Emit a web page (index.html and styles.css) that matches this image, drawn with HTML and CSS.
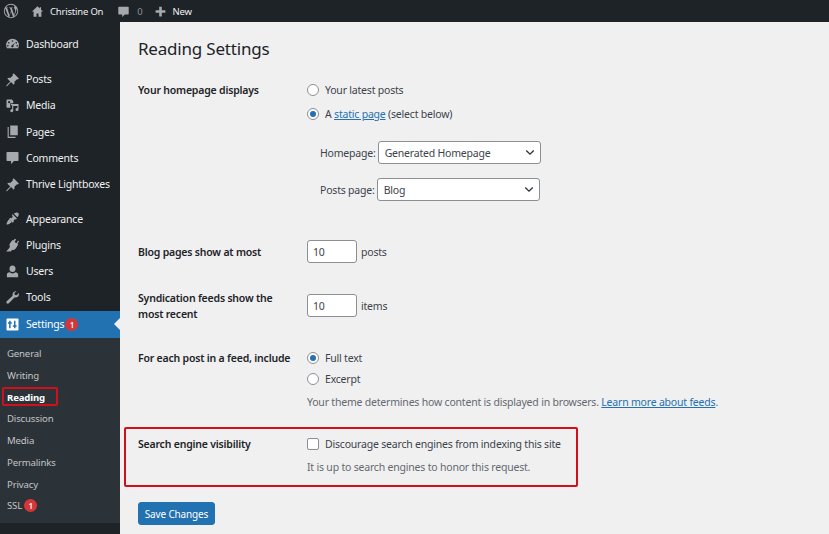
FILE: index.html
```html
<!DOCTYPE html>
<html lang="en">
<head>
<meta charset="utf-8">
<title>Reading Settings</title>
<link rel="stylesheet" href="styles.css">
</head>
<body>
<header class="adminbar">
  <svg class="wp-logo" viewBox="0 0 20 20"><path d="M10 1a9 9 0 1 0 0 18 9 9 0 0 0 0-18zM2.200 10c0-1.100.2-2.200.7-3.200l3.700 10.200A7.800 7.800 0 0 1 2.200 10zm7.800 7.800c-.8 0-1.500-.1-2.200-.3l2.300-6.800 2.400 6.500.1.100c-.8.300-1.700.5-2.600.5zm1.100-11.500c.5 0 .9-.1.900-.1.400 0 .4-.7 0-.7 0 0-1.300.1-2.100.1s-2-.1-2-.1c-.5 0-.5.700-.1.700 0 0 .4.100.9.100l1.300 3.500-1.800 5.400-3-8.900c.5 0 .9-.1.900-.1.400 0 .4-.7 0-.7 0 0-1.300.1-2.100.1h-.5A7.800 7.800 0 0 1 15.200 4.200h-.1c-.8 0-1.300.7-1.300 1.400 0 .7.400 1.200.8 1.900.3.500.7 1.200.7 2.200 0 .7-.3 1.500-.6 2.600l-.8 2.700-2.800-8.700zm2.900 10.500l2.400-6.900c.4-1.100.6-2 .6-2.700 0-.3 0-.5-.1-.8a7.800 7.800 0 0 1-2.900 10.400z"/></svg>
  <span class="bar-item home">
    <svg class="bar-icon" viewBox="0 0 20 20"><path d="M10 2 1.500 10H4v8h4.500v-5h3v5H16v-8h2.500L15.500 7.200V3.500h-2v1.800z"/></svg>
    <span class="bar-text">Christine On</span>
  </span>
  <span class="bar-item comments">
    <svg class="bar-icon" viewBox="0 0 20 20"><path d="M3 2.500h14a1 1 0 0 1 1 1v10a1 1 0 0 1-1 1h-5l-4 4v-4H3a1 1 0 0 1-1-1v-10a1 1 0 0 1 1-1z"/></svg>
    <span class="bar-count">0</span>
  </span>
  <span class="bar-item new">
    <svg class="bar-icon" viewBox="0 0 20 20"><path d="M8 2.500h4V8h5.500v4H12v5.500H8V12H2.500V8H8z"/></svg>
    <span class="bar-text">New</span>
  </span>
</header>

<div class="shell">
  <nav class="sidebar">
    <ul class="menu first">
      <li class="item"><svg class="icon" viewBox="0 0 20 20"><path fill-rule="evenodd" d="M10 3.500a8.500 8.500 0 0 0-8.500 8.500c0 1.500.4 3 1.100 4.200h14.800c.7-1.200 1.100-2.700 1.100-4.200A8.500 8.500 0 0 0 10 3.500zm0 2a1.100 1.100 0 1 1 0 2.200 1.100 1.100 0 0 1 0-2.200zM5 8a1.100 1.100 0 1 1 0 2.200A1.100 1.100 0 0 1 5 8zm10 0a1.100 1.100 0 1 1 0 2.200A1.100 1.100 0 0 1 15 8zm-1.500 1-2.400 3.600a1.500 1.500 0 1 1-1.300-.6zM3.800 12a1.100 1.100 0 1 1 0 2.200 1.100 1.100 0 0 1 0-2.200zm12.400 0a1.100 1.100 0 1 1 0 2.200 1.100 1.100 0 0 1 0-2.200z"/></svg>Dashboard</li>
    </ul>
    <ul class="menu second-group">
      <li class="item"><svg class="icon" viewBox="0 0 20 20"><path d="m11.500 1.500 7 7-1.500 1.500-1-.5-3.500 3.500c.5 1.500.2 3-.8 4L8 13.300 3 18.500l-1.500.5.500-1.500L7 12.500 3 8.800c1-1 2.500-1.300 4-.8l3.500-3.500-.5-1z"/></svg>Posts</li>
      <li class="item"><svg class="icon" viewBox="0 0 20 20"><path fill-rule="evenodd" d="M3 2h6l2 2v3H7v6H3a1 1 0 0 1-1-1V3a1 1 0 0 1 1-1zm2.500 2a1.500 1.500 0 1 0 0 3 1.500 1.500 0 0 0 0-3zM8 8h10v7.500a2 2 0 1 1-1.500-2V10.500H11V17a2 2 0 1 1-1.500-2V9.500H8z"/></svg>Media</li>
      <li class="item"><svg class="icon" viewBox="0 0 20 20"><path d="M7 2h10v13H7zM5 4v13h9v1.500H3.500V4z"/></svg>Pages</li>
      <li class="item"><svg class="icon" viewBox="0 0 20 20"><path d="M3 2.500h14a1 1 0 0 1 1 1v10a1 1 0 0 1-1 1h-5l-4 4v-4H3a1 1 0 0 1-1-1v-10a1 1 0 0 1 1-1z"/></svg>Comments</li>
      <li class="item"><svg class="icon" viewBox="0 0 20 20"><path d="m11.500 1.500 7 7-1.500 1.500-1-.5-3.500 3.500c.5 1.500.2 3-.8 4L8 13.300 3 18.500l-1.500.5.500-1.500L7 12.500 3 8.800c1-1 2.500-1.300 4-.8l3.500-3.500-.5-1z"/></svg>Thrive Lightboxes</li>
    </ul>
    <ul class="menu last-group">
      <li class="item"><svg class="icon" viewBox="0 0 20 20"><path d="M14 2.500c1.500-.8 3-.5 3.700.2.700.7 1 2.200.2 3.700l-1.400 2-5-5zM9.800 4.100l6 6-1.400 1.400-1-1-2 2 .5 1.500-1.500 1.500-5-5L7 9l1.500.5 2-2-1-1zM5.500 11l3.500 3.500c-2 2-5 3.500-7 3.500 0-2 1.500-5 3.500-7z"/></svg>Appearance</li>
      <li class="item"><svg class="icon" viewBox="0 0 20 20"><path d="m13.100 2.300 1.700 1-2 3.500 2.600 1.500 2-3.500 1.200.9-2 3.600 1 .6-3 5a4.500 4.500 0 0 1-5.200 2l-1.500 2.500-2-.5-.3.500H1.500l4-4.500 1-1.800a4.500 4.500 0 0 1 .4-5L10 4.100l1 .6z"/></svg>Plugins</li>
      <li class="item"><svg class="icon" viewBox="0 0 20 20"><path d="M10 2a4 4 0 0 1 4 4.500c0 2.300-1.500 4-4 4s-4-1.700-4-4A4 4 0 0 1 10 2zM6 11c1 1 2.500 1.500 4 1.500s3-.5 4-1.500c2 .5 3.500 1.500 3.500 3v3.500h-15V14c0-1.500 1.500-2.500 3.500-3z"/></svg>Users</li>
      <li class="item"><svg class="icon" viewBox="0 0 20 20"><path d="M14.500 1.500c-2.500 0-4.500 2-4.500 4.500 0 .5.100 1 .2 1.500L2.300 15a2 2 0 0 0 0 2.800c.8.800 2 .8 2.800 0l7.500-7.900c.5.100 1 .1 1.500.1 2.500 0 4.500-2 4.500-4.500 0-.5-.1-1-.2-1.500L15.500 7 13 6.500 12.500 4l3-2.300c-.3-.1-.7-.2-1-.2z"/></svg>Tools</li>
      <li class="item current">
        <svg class="icon" viewBox="0 0 20 20"><path fill-rule="evenodd" d="M3 2h14a1 1 0 0 1 1 1v14a1 1 0 0 1-1 1H3a1 1 0 0 1-1-1V3a1 1 0 0 1 1-1zm2.500 3v2H4v2h1.500v6h2V9H9V7H7.500V5zm6.500 0v6h-1.500v2H12v2h2v-2h1.500v-2H14V5z"/></svg>Settings<span class="badge">1</span>
      </li>
    </ul>
    <ul class="submenu">
      <li class="sub">General</li>
      <li class="sub">Writing</li>
      <li class="sub active">Reading<span class="mark"></span></li>
      <li class="sub">Discussion</li>
      <li class="sub">Media</li>
      <li class="sub">Permalinks</li>
      <li class="sub">Privacy</li>
      <li class="sub">SSL<span class="badge">1</span></li>
    </ul>
  </nav>

  <main class="content">
    <h1 class="title">Reading Settings</h1>

    <section class="row row-home">
      <div class="label">Your homepage displays</div>
      <div class="field">
        <div class="choice"><span class="radio"></span><span>Your latest posts</span></div>
        <div class="choice second"><span class="radio on"></span><span>A <a class="link">static page</a> (select below)</span></div>
        <div class="pick pick-home"><span>Homepage:</span><div class="select">Generated Homepage<svg class="chev" viewBox="0 0 12 8"><path d="M1.500 1.500 6 6l4.500-4.500"/></svg></div></div>
        <div class="pick pick-posts"><span>Posts page:</span><div class="select">Blog<svg class="chev" viewBox="0 0 12 8"><path d="M1.500 1.500 6 6l4.500-4.500"/></svg></div></div>
      </div>
    </section>

    <section class="row row-blog">
      <div class="label">Blog pages show at most</div>
      <div class="field inline"><div class="num">10</div>posts</div>
    </section>

    <section class="row row-feed">
      <div class="label">Syndication feeds show the most recent</div>
      <div class="field inline"><div class="num">10</div>items</div>
    </section>

    <section class="row row-each">
      <div class="label">For each post in a feed, include</div>
      <div class="field">
        <div class="choice"><span class="radio on"></span><span>Full text</span></div>
        <div class="choice excerpt"><span class="radio"></span><span>Excerpt</span></div>
        <p class="desc">Your theme determines how content is displayed in browsers. <a class="link">Learn more about feeds</a>.</p>
      </div>
    </section>

    <section class="row row-search">
      <div class="label">Search engine visibility</div>
      <div class="field">
        <div class="choice"><span class="check"></span><span>Discourage search engines from indexing this site</span></div>
        <p class="desc">It is up to search engines to honor this request.</p>
      </div>
    </section>

    <button class="save" type="button">Save Changes</button>
  </main>
</div>
```

FILE: styles.css
```css
* { box-sizing: border-box; }
html, body { margin: 0; height: 100%; overflow: hidden; }
body {
  width: 829px;
  height: 534px;
  background: #f0f0f1;
  font-family: "Noto Sans", "Open Sans", sans-serif;
  font-size: 10.500px;
  letter-spacing: -0.2px;
  color: #3c434a;
  display: flex;
  flex-direction: column;
}
ul { list-style: none; margin: 0; padding: 0; }

.adminbar {
  height: 22px;
  flex: none;
  background: #1d2327;
  color: #f0f0f1;
  display: flex;
  align-items: center;
  font-size: 9.500px;
  padding-left: 3px;
}
.wp-logo { width: 16px; height: 16px; fill: #a7aaad; }
.bar-item { display: flex; align-items: center; gap: 6px; }
.bar-icon { width: 13px; height: 13px; fill: #a7aaad; }
.home { margin-left: 12px; }
.comments { margin-left: 14px; }
.new { margin-left: 11px; }
.bar-count { color: #8c8f94; margin-left: 1px; }

.shell { flex: 1; display: flex; min-height: 0; }

.sidebar {
  width: 120px;
  flex: none;
  background: #1d2327;
  color: #f0f0f1;
}
.menu { padding-bottom: 9.500px; }
.menu.first { padding-top: 8.500px; }
.menu.second-group { padding-bottom: 8.500px; }
.menu.last-group { padding-bottom: 0; }
.item {
  height: 26.200px;
  display: flex;
  align-items: center;
  padding-left: 4.500px;
  gap: 6.500px;
  position: relative;
}
.icon { width: 15px; height: 15px; fill: #a7aaad; flex: none; }
.item.current { background: #2271b1; color: #fff; margin-top: 1px; }
.item.current .icon { fill: #fff; }
.item.current::after {
  content: "";
  position: absolute;
  right: 0;
  top: 7px;
  border: 6px solid transparent;
  border-right-color: #f0f0f1;
  border-left-width: 0;
}
.badge {
  display: inline-flex;
  align-items: center;
  justify-content: center;
  width: 13px;
  height: 13px;
  border-radius: 50%;
  background: #d63638;
  color: #fff;
  font-size: 8px;
  font-weight: 600;
  margin-left: 2px;
}
.item .badge { margin-left: -5.500px; }
.submenu { background: #2c3338; padding: 5.500px 0 6px; }
.sub {
  height: 21.700px;
  display: flex;
  align-items: center;
  padding-left: 7px;
  color: #c3c4c7;
  font-size: 9.600px;
  letter-spacing: -0.150px;
  position: relative;
}
.sub.active { color: #fff; font-weight: 700; }
.mark {
  position: absolute;
  left: 2px;
  top: 0.500px;
  width: 56px;
  height: 19px;
  border: 2px solid #d0101c;
  border-radius: 2px;
}

.content { flex: 1; padding: 0 0 0 18px; position: relative; }
.title {
  margin: 15px 0 0;
  font-size: 17px;
  letter-spacing: -0.200px;
  line-height: 23px;
  font-weight: 400;
  color: #1d2327;
}
.row { display: flex; position: relative; }
.label {
  width: 169px;
  flex: none;
  font-weight: 600;
  color: #1d2327;
  line-height: 16px;
  padding-right: 14px;
}
.field { flex: 1; }
.choice { display: flex; align-items: center; height: 16px; }
.second { margin-top: 8px; }
.excerpt { margin-top: 5px; }
.radio, .check {
  width: 12px;
  height: 12px;
  background: #fff;
  border: 1px solid #8c8f94;
  margin-right: 6px;
  flex: none;
  position: relative;
}
.radio { border-radius: 50%; }
.check { border-radius: 2px; }
.radio.on::after {
  content: "";
  position: absolute;
  left: 2px;
  top: 2px;
  width: 6px;
  height: 6px;
  border-radius: 50%;
  background: #2271b1;
}
.link { color: #2271b1; text-decoration: underline; }
.pick { display: flex; align-items: center; gap: 2px; }
.pick-home { margin: 19px 0 0 13px; }
.pick-posts { margin: 14px 0 0 13px; }
.select {
  width: 163px;
  height: 23px;
  background: #fff;
  border: 1px solid #8c8f94;
  border-radius: 3px;
  padding-left: 6px;
  display: flex;
  align-items: center;
  justify-content: space-between;
}
.chev { width: 10px; height: 7px; margin-right: 5px; fill: none; stroke: #2c3338; stroke-width: 1.600; }
.inline { display: flex; align-items: center; gap: 4px; height: 23px; }
.num {
  width: 50px;
  height: 23px;
  background: #fff;
  border: 1px solid #8c8f94;
  border-radius: 3px;
  padding-left: 5px;
  display: flex;
  align-items: center;
}
.row-home { margin-top: 22px; }
.row-blog { margin-top: 39px; }
.row-blog .label { line-height: 24px; }
.row-feed { margin-top: 30px; }
.row-feed .label { margin-top: -4px; }
.row-each { margin-top: 28px; }
.desc { margin: 7px 0 0; color: #646970; line-height: 16px; }
.row-search { margin-top: 26px; }
.row-search::before {
  content: "";
  box-sizing: border-box;
  position: absolute;
  left: -14px;
  top: -9px;
  width: 454px;
  height: 59.500px;
  border: 2px solid #d0101c;
  border-radius: 2px;
}
.save {
  display: block;
  margin-top: 27px;
  width: 77px;
  height: 23px;
  padding: 0;
  background: #2271b1;
  border: 1px solid #2271b1;
  border-radius: 3px;
  color: #fff;
  font: inherit;
  font-size: 10px;
  letter-spacing: -0.150px;
}
```
